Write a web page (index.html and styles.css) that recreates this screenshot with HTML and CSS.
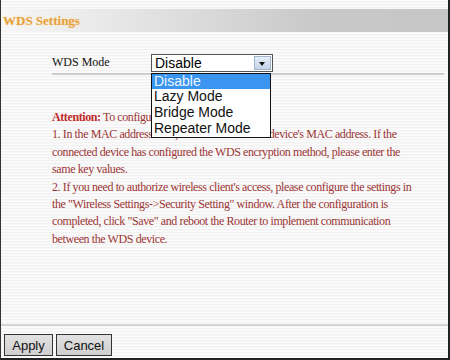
FILE: index.html
```html
<!DOCTYPE html>
<html lang="en">
<head>
    <meta charset="UTF-8">
    <title>WDS Settings</title>
    <link rel="stylesheet" href="styles.css">
</head>
<body>
    <div class="frame">
        <div class="title-bar">WDS Settings</div>

        <div class="content">
            <div class="mode-row">
                <span class="mode-label">WDS Mode</span>
                <div class="select-box">
                    <div class="select">
                        <span class="select-value">Disable</span>
                        <span class="select-arrow"></span>
                    </div>
                    <ul class="select-list">
                        <li class="selected">Disable</li>
                        <li>Lazy Mode</li>
                        <li>Bridge Mode</li>
                        <li>Repeater Mode</li>
                    </ul>
                </div>
            </div>

            <div class="notes">
                <p><b>Attention:</b> To configure WDS function:</p>
                <p>1. In the MAC address field, enter the connected device's MAC address. If the connected device has configured the WDS encryption method, please enter the same key values.</p>
                <p>2. If you need to authorize wireless client's access, please configure the settings in the "Wireless Settings-&gt;Security Setting" window. After the configuration is completed, click "Save" and reboot the Router to implement communication between the WDS device.</p>
            </div>
        </div>

        <div class="footer">
            <button class="btn">Apply</button>
            <button class="btn">Cancel</button>
        </div>
    </div>
</body>
</html>
```

FILE: styles.css
```css
* {
    box-sizing: border-box;
    margin: 0;
    padding: 0;
}

body {
    width: 450px;
    height: 360px;
    overflow: hidden;
    font-family: "Liberation Serif", serif;
}

.frame {
    height: 360px;
    display: flex;
    flex-direction: column;
    border-left: 1px solid #333;
    border-right: 2px solid #222;
    border-bottom: 2px solid #222;
    background: repeating-linear-gradient(#fbfbfb 0 1px, #f1f1f1 1px 2px, #f8f8f8 2px 3px);
}

.title-bar {
    margin-top: 9px;
    height: 23px;
    line-height: 23px;
    padding-left: 2px;
    font-size: 13px;
    font-weight: bold;
    color: #e6a03a;
    text-shadow: 0 0 3px #fbe3b8;
    background: linear-gradient(to right, #f7f7f7 0%, #e4e4e4 30%, #c9c9c9 70%, #c6c6c6 100%);
}

.content {
    padding: 0 4px 0 51px;
}

.mode-row {
    display: flex;
    align-items: center;
    margin-top: 22px;
    height: 21px;
    padding-bottom: 2px;
    border-bottom: 2px solid #cdcdcd;
}

.mode-label {
    width: 99px;
    font-size: 12px;
    color: #111;
}

.select-box {
    position: relative;
}

.select {
    display: flex;
    width: 122px;
    height: 18px;
    border: 1px solid #555;
    background: #fff;
    font-family: "Liberation Sans", Arial, sans-serif;
    font-size: 14px;
}

.select-value {
    flex: 1;
    padding-left: 3px;
    line-height: 16px;
}

.select-arrow {
    width: 17px;
    margin: 1px;
    border: 1px solid #9fb5cf;
    background: linear-gradient(#e6eef8, #c4d4e8);
    position: relative;
}

.select-arrow::after {
    content: "";
    position: absolute;
    left: 4px;
    top: 5px;
    border-left: 3.5px solid transparent;
    border-right: 3.5px solid transparent;
    border-top: 4px solid #111;
}

/* open dropdown lies over the notes */
.select-list {
    position: absolute;
    left: 0;
    top: 19px;
    width: 120px;
    list-style: none;
    background: #fff;
    border: 1px solid #111;
    font-family: "Liberation Sans", Arial, sans-serif;
    font-size: 14px;
    z-index: 10;
}

.select-list li {
    height: 15.75px;
    line-height: 15px;
    padding-left: 2px;
    color: #111;
}

.select-list li.selected {
    background: #3b95f0;
    color: #eaf6ff;
}

.notes {
    margin-top: 34px;
    width: 366px;
    font-size: 12px;
    letter-spacing: -0.4px;
    line-height: 17.4px;
    color: #9c3535;
}

.notes b {
    color: #c02a2a;
}

.footer {
    margin-top: auto;
    border-top: 2px solid #d2d2d2;
    padding: 8px 0 2px 3px;
    display: flex;
    gap: 3px;
}

.btn {
    width: 49px;
    height: 22px;
    border: 1px solid #333;
    background: linear-gradient(#e2e2e2, #cfcfcf);
    font-family: "Liberation Sans", Arial, sans-serif;
    font-size: 13px;
    color: #111;
}

.btn + .btn {
    width: 56px;
}
```
